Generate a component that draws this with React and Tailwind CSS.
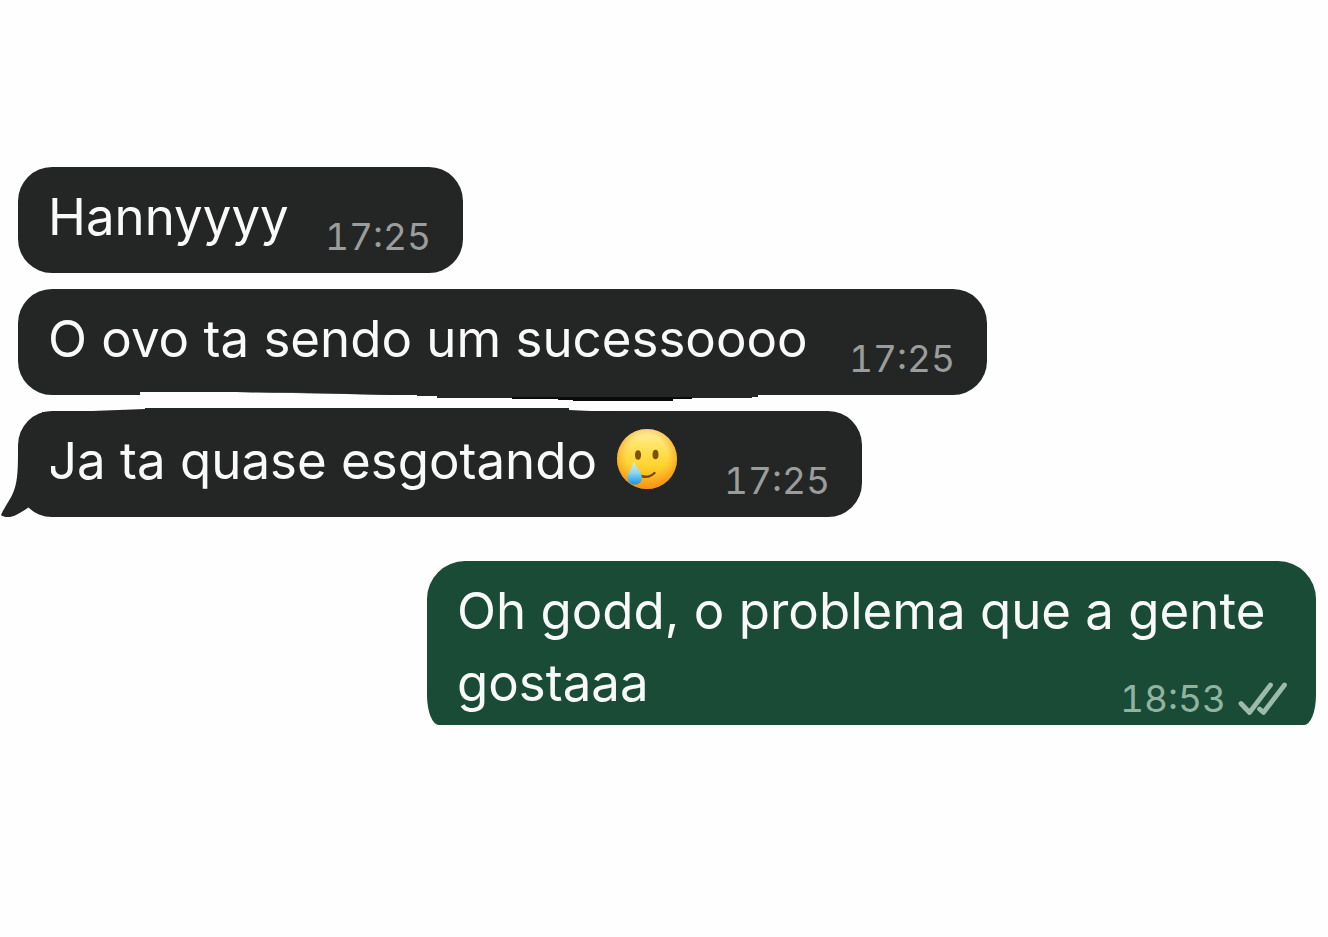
import React from 'react';

const incoming = [
  { id: 1, text: 'Hannyyyy', time: '17:25', width: 'w-[445px]' },
  { id: 2, text: 'O ovo ta sendo um sucessoooo', time: '17:25', width: 'w-[969px]', edge: 'bottom' },
  { id: 3, text: 'Ja ta quase esgotando', time: '17:25', width: 'w-[844px]', edge: 'top', emoji: true, tail: true },
];

const TearEmoji = () => (
  <svg role="img" aria-label="smiling face with tear" viewBox="0 0 60 60" className="mt-1 w-[60px] h-[60px] shrink-0">
    <defs>
      <linearGradient id="faceDown" x1="0" y1="0" x2="0" y2="1">
        <stop offset="0" stopColor="#fff3b0" />
        <stop offset="0.25" stopColor="#ffe468" />
        <stop offset="0.6" stopColor="#fdd52f" />
        <stop offset="1" stopColor="#f99e1c" />
      </linearGradient>
      <radialGradient id="faceRim" cx="0.5" cy="0.45" r="0.56">
        <stop offset="0.6" stopColor="#f9a01b" stopOpacity="0" />
        <stop offset="1" stopColor="#f58f12" stopOpacity="0.8" />
      </radialGradient>
      <linearGradient id="tear" x1="0" y1="0" x2="0" y2="1">
        <stop offset="0" stopColor="#d3f3ee" />
        <stop offset="0.5" stopColor="#8fd6ee" />
        <stop offset="1" stopColor="#1593ea" />
      </linearGradient>
    </defs>
    <circle cx="30" cy="30" r="30" fill="url(#faceDown)" />
    <circle cx="30" cy="30" r="30" fill="url(#faceRim)" />
    <ellipse cx="21" cy="26" rx="3" ry="4.800" fill="#7d5205" />
    <ellipse cx="38.500" cy="25.500" rx="3" ry="4.800" fill="#7d5205" />
    <path d="M24 47 Q32 49.500 37.500 44" fill="none" stroke="#7d4607" strokeWidth="2.400" strokeLinecap="round" />
    <path d="M17 32 C18.500 38 25 43 25 48.500 C25 53 21.500 55.500 18 55.500 C14 55.500 10.500 53 10.500 48.500 C10.500 43 16 38 17 32Z" fill="url(#tear)" />
  </svg>
);

const DoubleCheck = () => (
  <svg role="img" aria-label="delivered" viewBox="0 0 50 34" className="w-[50px] h-[34px] shrink-0" fill="none" stroke="#9dbbaa" strokeWidth="4.800" strokeLinecap="round" strokeLinejoin="round">
    <path d="M3 21.500 L11.500 30.500 L32.500 3" />
    <path d="M21.500 27 L25.500 30.500 L46.500 3" />
  </svg>
);

const Tail = () => (
  <svg aria-hidden="true" viewBox="0 0 50 64" className="absolute -left-[17px] bottom-0 w-[50px] h-[64px]">
    <path d="M17 0 C17 20 16 31 12 40 C9 47 4 53 0 62 C3 65 10 64 13 63 C19 60 24 57 28 54 C33 59 40 63 50 63 L50 0Z" fill="#242625" />
  </svg>
);

// hand-cut edges between the second and third bubble
const BottomEdge = () => (
  <svg aria-hidden="true" viewBox="0 0 660 12" className="absolute left-[120px] -bottom-[7px] w-[660px] h-[12px]">
    <path d="M2 2 H98 L170 3 L258 5 V12 H2Z" fill="#fefefe" />
    <path d="M98 1 L170 3 L258 4 H620 V7 H299 V6 H279 V5 H258 L98 2Z" fill="#242625" />
    <path d="M299 6 H614 V8 H299Z" fill="#242625" />
    <path d="M374 7 H554 V9 H535 V11 H435 V10 H420 V9 H374Z" fill="#090b0a" />
  </svg>
);

const TopEdge = () => (
  <svg aria-hidden="true" viewBox="0 0 570 5" className="absolute left-[24px] -top-[3px] w-[570px] h-[5px]">
    <path d="M0 4 L50 3 L103 1 V0 H527 V2 L570 4 V5 H0Z" fill="#242625" />
  </svg>
);

const App = () => {
  return (
    <main className="min-h-screen bg-[#fefefe] pt-[167px] pr-3 pb-6 pl-[18px] font-['Inter',sans-serif] text-[51px] leading-[72px] text-[#f8f9f8]">
      <div className="flex flex-col items-start gap-4">
        {incoming.map((msg) => (
          <div key={msg.id} className={`relative flex justify-between max-w-full min-h-[106px] rounded-[34px] bg-[#242625] pt-3.5 pr-8 pb-4 pl-[30px] ${msg.width}`}>
            {msg.tail && <Tail />}
            {msg.edge === 'bottom' && <BottomEdge />}
            {msg.edge === 'top' && <TopEdge />}
            <div className="flex items-start gap-5">
              <p>{msg.text}</p>
              {msg.emoji && <TearEmoji />}
            </div>
            <time className="self-end text-[37px] leading-[40px] tabular-nums text-[#9b9d9c]">{msg.time}</time>
          </div>
        ))}
      </div>

      {/* Reply */}
      <div className="mt-11 ml-auto flex w-[889px] max-w-full flex-col bg-[#194b37] pt-3.5 pr-7 pb-1.5 pl-[30px] [border-radius:38px_38px_12px_12px/38px_38px_30px_30px]">
        <p>Oh godd, o problema que a gente</p>
        <div className="flex justify-between">
          <p>gostaaa</p>
          <div className="flex items-center gap-3 self-end">
            <time className="text-[37px] leading-[40px] tabular-nums text-[#91b3a1]">18:53</time>
            <DoubleCheck />
          </div>
        </div>
      </div>
    </main>
  );
};

export default App;
